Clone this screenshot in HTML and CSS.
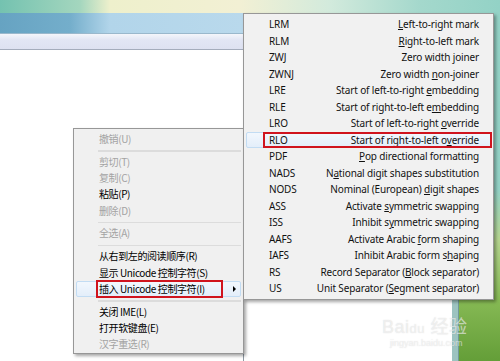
FILE: index.html
```html
<!DOCTYPE html>
<html>
<head>
<meta charset="utf-8">
<link rel="stylesheet" href="styles.css">
</head>
<body>
<div class="screen">
  <div class="win win-back"></div>
  <div class="win win-front">
    <div class="titlebar"></div>
    <div class="toolbar"></div>
    <div class="client"></div>
  </div>

  <div class="watermark">
    <div class="wm-logo">Bai<span class="paw">du</span> 经验</div>
    <div class="wm-url">jingyan.baidu.com</div>
  </div>

  <div class="menu ctx">
    <div class="item dis">撤销(U)</div>
    <div class="sep"></div>
    <div class="item dis">剪切(T)</div>
    <div class="item dis">复制(C)</div>
    <div class="item">粘贴(P)</div>
    <div class="item dis">删除(D)</div>
    <div class="sep"></div>
    <div class="item dis">全选(A)</div>
    <div class="sep"></div>
    <div class="item">从右到左的阅读顺序(R)</div>
    <div class="item">显示 Unicode 控制字符(S)</div>
    <div class="item hot">插入 Unicode 控制字符(I)<span class="arrow"></span><span class="redbox redbox-ctx"></span></div>
    <div class="sep"></div>
    <div class="item">关闭 IME(L)</div>
    <div class="item">打开软键盘(E)</div>
    <div class="item dis">汉字重选(R)</div>
  </div>

  <div class="menu sub">
    <div class="row"><span class="code">LRM</span><span class="desc"><u>L</u>eft-to-right mark</span></div>
    <div class="row"><span class="code">RLM</span><span class="desc"><u>R</u>ight-to-left mark</span></div>
    <div class="row"><span class="code">ZWJ</span><span class="desc">Zero width joiner</span></div>
    <div class="row"><span class="code">ZWNJ</span><span class="desc">Zero width <u>n</u>on-joiner</span></div>
    <div class="row"><span class="code">LRE</span><span class="desc">Start of left-to-right <u>e</u>mbedding</span></div>
    <div class="row"><span class="code">RLE</span><span class="desc">Start of right-to-left e<u>m</u>bedding</span></div>
    <div class="row"><span class="code">LRO</span><span class="desc">Start of left-to-right <u>o</u>verride</span></div>
    <div class="row hot"><span class="code">RLO</span><span class="desc">Start of right-to-left o<u>v</u>erride</span><span class="redbox redbox-sub"></span></div>
    <div class="row"><span class="code">PDF</span><span class="desc"><u>P</u>op directional formatting</span></div>
    <div class="row"><span class="code">NADS</span><span class="desc">N<u>a</u>tional digit shapes substitution</span></div>
    <div class="row"><span class="code">NODS</span><span class="desc">Nominal (European) <u>d</u>igit shapes</span></div>
    <div class="row"><span class="code">ASS</span><span class="desc">Activate <u>s</u>ymmetric swapping</span></div>
    <div class="row"><span class="code">ISS</span><span class="desc">Inhibit s<u>y</u>mmetric swapping</span></div>
    <div class="row"><span class="code">AAFS</span><span class="desc">Activate Arabic <u>f</u>orm shaping</span></div>
    <div class="row"><span class="code">IAFS</span><span class="desc">Inhibit Arabic form s<u>h</u>aping</span></div>
    <div class="row"><span class="code">RS</span><span class="desc">Record Separator (<u>B</u>lock separator)</span></div>
    <div class="row"><span class="code">US</span><span class="desc">Unit Separator (<u>S</u>egment separator)</span></div>
  </div>
</div>
</body>
</html>
```

FILE: styles.css
```css
* { box-sizing: border-box; }
html, body { margin: 0; padding: 0; }
body { width: 500px; height: 361px; overflow: hidden; }

.screen {
  position: relative;
  width: 500px;
  height: 361px;
  overflow: hidden;
  background:
    linear-gradient(180deg, rgba(0,0,0,0) 0, rgba(0,0,0,0) 190px, #b5d58f 240px, #86b954 300px, #649e38 361px),
    linear-gradient(90deg, #74c2b0 0, #a4d6be 80px, #eef0cc 110px, #f2f0d4 240px, #d2eadc 330px, #a4d8cc 420px, #93d2c6 500px);
  font-family: "Noto Sans", "Open Sans", "Noto Sans CJK SC", sans-serif;
}

.win { position: absolute; }
.win-back {
  left: 243px; top: 13px; width: 215px; height: 348px;
  background: #ffffff;
  border-right: 6px solid #9cc3c0;
  box-shadow: 1px 0 0 #6f9a98;
}
.win-front {
  left: 0; top: 13px; width: 244px; height: 348px;
  display: flex; flex-direction: column;
  border-right: 1px solid #8f9aa4;
  background: #fff;
}
.titlebar {
  height: 21px;
  background: linear-gradient(90deg, #66a3c2 0, #74aecb 70px, #b2d5ea 110px, #b9d9ec 244px);
  border-bottom: 1px solid #9ab8cc;
}
.toolbar {
  height: 16px;
  background: linear-gradient(180deg, #f4f6fb 0, #e2e6f4 40%, #dde1f1 100%);
  border-bottom: 1px solid #a4acbc;
}
.client { flex: 1; background: #fff; }

.watermark {
  position: absolute; left: 382px; top: 318px;
  color: rgba(255,255,255,0.55);
  text-shadow: 0 0 1px rgba(140,140,140,0.35);
  font-family: "Liberation Sans", "Noto Sans CJK SC", sans-serif;
}
.wm-logo { font-size: 18px; line-height: 19px; letter-spacing: 0.5px; }
.wm-logo .paw { font-size: 13px; }
.wm-url { font-size: 9px; line-height: 10px; margin-left: 8px; }

.menu {
  position: absolute;
  background: #f0f0f0;
  border: 1px solid #979797;
  box-shadow: 2px 2px 3px rgba(0,0,0,0.35);
}

/* context menu */
.ctx {
  left: 73px; top: 128px; width: 171px;
  padding: 2px 2px 0 2px;
  display: flex; flex-direction: column;
  font-family: "Noto Sans CJK SC", "Noto Sans", sans-serif;
  font-size: 10px;
  color: #000;
}
.ctx .item {
  position: relative;
  height: 16.3px;
  line-height: 16.3px;
  padding-left: 23px;
  white-space: nowrap;
  letter-spacing: -0.4px;
}
.ctx .item.dis { color: #a3a3a3; }
.ctx .sep {
  height: 6.5px;
  margin-left: 22px;
  border-top: 3px solid transparent;
  border-bottom: 2.5px solid transparent;
  background: #dcdcdc;
  background-clip: padding-box;
}
.ctx .item.hot {
  background: linear-gradient(180deg, #f2f7fd 0, #e3eefa 100%);
  border: 1px solid #c2dcf3;
  border-radius: 2px;
  padding-left: 22px;
  line-height: 14.3px;
}
.arrow {
  position: absolute; right: 4px; top: 4px;
  width: 0; height: 0;
  border-left: 3px solid #000;
  border-top: 3px solid transparent;
  border-bottom: 3px solid transparent;
}
.redbox {
  position: absolute;
  border: 2px solid #d0141e;
  pointer-events: none;
}
.redbox-ctx { left: 19px; width: 127px; top: -2px; bottom: -2px; }

/* submenu */
.sub {
  left: 243px; top: 13px; width: 251px;
  padding: 2px 2px;
  display: flex; flex-direction: column;
  background: #f1f1f1;
  color: #111;
  font-size: 10px;
  letter-spacing: -0.15px;
}
.sub .row {
  position: relative;
  display: flex; justify-content: space-between; align-items: center;
  height: 16.5px;
  padding: 0 12px 0 23px;
  white-space: nowrap;
}
.sub .row.hot {
  background: linear-gradient(180deg, #f2f7fd 0, #e3eefa 100%);
  border: 1px solid #c2dcf3;
  border-radius: 2px;
  padding: 0 11px 0 22px;
}
.sub u { text-decoration-thickness: 1px; text-underline-offset: 1px; }
.redbox-sub { left: 16px; right: -2px; top: -1px; bottom: -1px; }
```
